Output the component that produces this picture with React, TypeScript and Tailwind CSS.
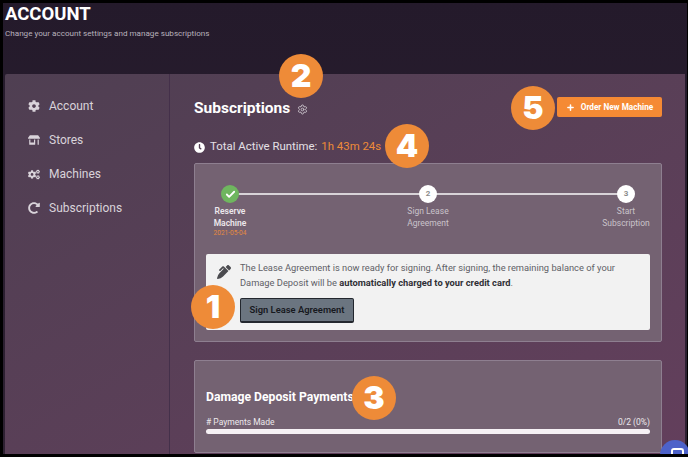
import { Check, Plus, Settings } from 'lucide-react';
import { FaClock, FaCog, FaCogs, FaPenAlt, FaRedoAlt, FaStoreAlt } from 'react-icons/fa';

const FONT = "font-['Roboto',sans-serif]";

const Badge = ({ n, className }: { n: string; className: string }) => (
  <div className={`absolute w-[44px] h-[44px] rounded-full bg-[#ee8b38] flex items-center justify-center text-white text-[32px] leading-none font-black font-['Inter',sans-serif] ${className}`}>
    {n}
  </div>
);

const NavItem = ({ icon, label }: { icon: React.ReactNode; label: string }) => (
  <div className="h-[34px] flex items-center gap-[9px] text-[12px] text-[#d9d3da]">
    <span className="w-[12px] flex justify-center">{icon}</span>
    <span>{label}</span>
  </div>
);

const Step = ({ n, done, lines, date }: { n: string; done?: boolean; lines: string[]; date?: string }) => (
  <div className="relative w-[48px] flex flex-col items-center">
    <div className={`w-[18px] h-[18px] rounded-full flex items-center justify-center text-[8px] font-bold ${done ? 'bg-[#6fb65f]' : 'bg-white text-[#8b8b8b]'}`}>
      {done ? <Check size={11} strokeWidth={4} className="text-white" /> : n}
    </div>
    <div className={`mt-[3px] w-[72px] text-[8.5px] leading-[11.5px] text-center ${done ? 'font-semibold text-[#ece8ec]' : 'text-[#c9c3ca]'}`}>
      {lines.map(l => <div key={l}>{l}</div>)}
    </div>
    {date && <div className="text-[6.5px] leading-[9px] text-[#e58a3f]">{date}</div>}
  </div>
);

export default function App() {
  return (
    <div className={`relative w-[688px] h-[457px] overflow-hidden bg-black pt-[3px] pl-[3px] pr-[1px] pb-[3px] ${FONT}`}>
      <div className="h-full bg-gradient-to-b from-[#241a2b] to-[#2e2132] flex flex-col pl-[2px] pr-[2px]">
        <header className="h-[71px] shrink-0">
          <h1 className="text-[18.5px] leading-[22px] font-bold text-white">ACCOUNT</h1>
          <p className="mt-[3px] text-[8.1px] leading-[10px] text-[#b9b2bc]">Change your account settings and manage subscriptions</p>
        </header>

        <div className="flex-1 flex bg-gradient-to-br from-[#4f3f52] to-[#633f5c] rounded-tl-[2px] min-h-0">
          <aside className="w-[165px] shrink-0 border-r border-[#44304a] pt-[15px] pl-[23px]">
            <NavItem icon={<FaCog size={12} />} label="Account" />
            <NavItem icon={<FaStoreAlt size={12} />} label="Stores" />
            <NavItem icon={<FaCogs size={13} />} label="Machines" />
            <NavItem icon={<FaRedoAlt size={12} />} label="Subscriptions" />
          </aside>

          <main className="flex-1 pl-[24px] pr-[23px] min-w-0">
            <div className="h-[42px] mt-[23px] flex justify-between items-start">
              <div className="flex items-center gap-[7px] h-[22px] translate-y-[1px]">
                <h2 className="text-[15.5px] font-bold text-white">Subscriptions</h2>
                <Settings size={11} className="text-[#c9c3ca]" />
              </div>
              <button className="w-[105px] h-[20px] rounded-[2px] bg-[#f58a34] text-white text-[8.2px] font-bold flex items-center justify-center gap-[6px]">
                <Plus size={9} strokeWidth={4} />
                Order New Machine
              </button>
            </div>

            <div className="flex items-center gap-[4px] h-[14px] text-[11.4px] text-[#e4e0e5] translate-y-[1px]">
              <FaClock size={11} className="text-white mr-[1px]" />
              <span>Total Active Runtime:</span>
              <span className="text-[#ee8b38]">1h 43m 24s</span>
            </div>

            <section className="mt-[10px] h-[179px] border border-[#8e7f90] rounded-[2px] bg-[#746272] px-[11px] pt-[21px]">
              <div className="relative flex justify-between">
                <div className="absolute left-[24px] right-[24px] top-[8px] h-[2px] bg-[#d8d3d8]" />
                <Step n="1" done lines={['Reserve', 'Machine']} date="2021-05-04" />
                <Step n="2" lines={['Sign Lease', 'Agreement']} />
                <Step n="3" lines={['Start', 'Subscription']} />
              </div>

              <div className="mt-[16px] h-[76px] bg-[#f2f2f2] rounded-[2px] flex pl-[11px] pt-[7px]">
                <FaPenAlt size={14} className="text-[#4b4b4f] mt-[4px] mr-[9px] shrink-0" />
                <div className="text-[9.3px] leading-[14.5px] text-[#5f5f66]">
                  <p>
                    The Lease Agreement is now ready for signing. After signing, the remaining balance of your<br />
                    Damage Deposit will be <b className="text-[#2f2f35]">automatically charged to your credit card</b>.
                  </p>
                  <button className="mt-[8px] w-[114px] h-[25px] rounded-[2px] bg-[#6b7580] border border-[#23272e] border-b-2 text-[9.4px] font-semibold text-[#17191e]">
                    Sign Lease Agreement
                  </button>
                </div>
              </div>
            </section>

            <section className="mt-[18px] h-[93px] border border-[#8e7f90] rounded-[2px] bg-[#746272] px-[11px] pt-[27px]">
              <h3 className="text-[12.2px] leading-[18px] font-bold text-white">Damage Deposit Payments</h3>
              <div className="mt-[11px] flex justify-between text-[8.5px] leading-[10px] text-[#ece8ec]">
                <span># Payments Made</span>
                <span>0/2 (0%)</span>
              </div>
              <div className="mt-[2px] h-[5px] rounded-full bg-[#f6f1f5]" />
            </section>
          </main>
        </div>
      </div>

      <Badge n="2" className="left-[279px] top-[54px]" />
      <Badge n="5" className="left-[511px] top-[86px]" />
      <Badge n="4" className="left-[385px] top-[124px]" />
      <Badge n="1" className="left-[191px] top-[285px]" />
      <Badge n="3" className="left-[352px] top-[376px]" />
      <div className="absolute left-[660px] top-[440px] w-[30px] h-[30px] rounded-full bg-[#4d62c9]">
        <div className="absolute left-[11px] top-[8px] w-[13px] h-[6px] border-t-2 border-x-2 border-white rounded-t-[3px]" />
      </div>
      <div className="absolute left-0 right-0 bottom-0 h-[3px] bg-black" />
    </div>
  );
}
